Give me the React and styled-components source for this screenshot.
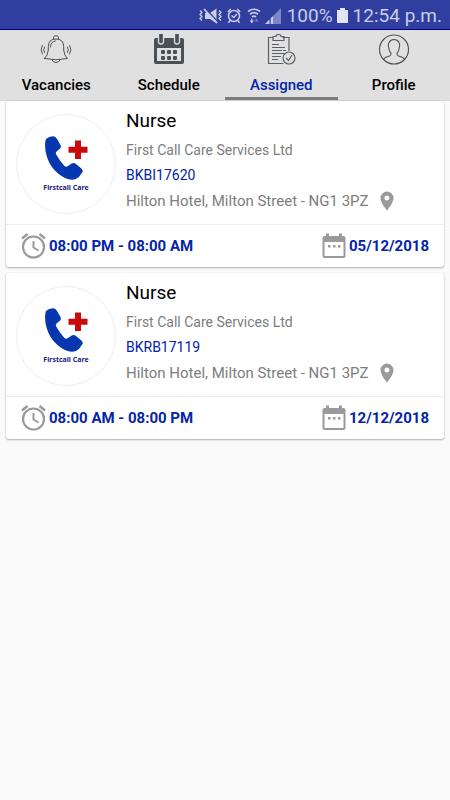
import React from 'react'
import styled, { createGlobalStyle } from 'styled-components'

const blue = '#303f9f'
const link_color = '#0424a8'
const gray = '#7d7d7d'
const icon_gray = '#9a9a9a'

const GlobalStyle = createGlobalStyle`
  * {
    box-sizing: border-box;
  }
  body {
    margin: 0;
    background: #fafafa;
    font-family: Roboto, sans-serif;
    color: #000;
  }
`

const StatusBar = styled.header`
  display: flex;
  align-items: center;
  justify-content: flex-end;
  height: 30px;
  padding: 2px 8px 0 0;
  background: ${blue};
  border-bottom: 1px solid #00008b;
  color: #c9cde8;
  font-size: 19px;
  line-height: 28px;
  svg {
    display: block;
    flex: none;
  }
`
const StatusIcons = styled.div`
  display: flex;
  align-items: center;
  gap: 4px;
  margin-right: 6px;
`
const Battery = styled.div`
  display: flex;
  align-items: center;
  gap: 4px;
  margin-right: 5px;
`

const Tabs = styled.nav`
  display: grid;
  grid-template-columns: repeat(4, 1fr);
  background: #e0e0e0;
  border-bottom: 1px solid #d6d6d6;
`
const Tab = styled.button`
  display: flex;
  flex-direction: column;
  align-items: center;
  gap: 9px;
  height: 70px;
  padding: 4px 0 0;
  border: 0;
  border-bottom: 3px solid ${props => props.$active ? '#7c7c7c' : 'transparent'};
  background: none;
  color: ${props => props.$active ? link_color : '#000'};
  font-family: inherit;
  font-size: 15px;
  font-weight: 500;
  line-height: 20px;
  cursor: pointer;
  svg {
    display: block;
  }
`

const List = styled.main`
  display: flex;
  flex-direction: column;
  gap: 6px;
  padding: 0 6px 6px;
`
const Card = styled.article`
  background: #fff;
  border-radius: 3px;
  box-shadow: 0 1px 2px rgba(0,0,0,0.3), 0 0 1px rgba(0,0,0,0.12);
`
const CardBody = styled.div`
  display: flex;
  gap: 10px;
  height: 123px;
  padding: 0 10px;
`
const Logo = styled.div`
  display: flex;
  flex: none;
  flex-direction: column;
  align-items: center;
  width: 100px;
  height: 100px;
  margin-top: 13px;
  padding-top: 21px;
  border: 1px solid #eeeeee;
  border-radius: 50%;
  color: #1a2080;
  font-family: "Noto Sans", sans-serif;
  font-size: 7px;
  font-weight: 700;
  line-height: 10px;
  svg {
    display: block;
    margin-bottom: 2px;
  }
`
const Details = styled.div`
  flex: 1;
  min-width: 0;
  padding-top: 8px;
`
const Title = styled.h2`
  margin: 0 0 7px;
  font-size: 19px;
  font-weight: 400;
  line-height: 24px;
`
const Company = styled.div`
  margin-bottom: 5px;
  color: ${gray};
  font-size: 14px;
  line-height: 20px;
`
const Reference = styled.div`
  margin-bottom: 4px;
  color: ${link_color};
  font-size: 14px;
  line-height: 20px;
`
const Address = styled.div`
  display: flex;
  align-items: center;
  gap: 12px;
  color: ${gray};
  font-size: 15px;
  line-height: 24px;
  white-space: nowrap;
`
const CardFooter = styled.div`
  display: flex;
  align-items: center;
  justify-content: space-between;
  height: 43px;
  padding: 0 15px;
  border-top: 1px solid #ececec;
`
const When = styled.div`
  display: flex;
  align-items: center;
  gap: 3px;
  color: ${link_color};
  font-size: 15px;
  font-weight: 700;
  line-height: 20px;
  svg {
    display: block;
  }
`

const MuteIcon = () => (
  <svg width="24" height="16" viewBox="0 0 24 16" fill="none" stroke="#c9cde8" strokeWidth="1.3">
    <path d="M6 5h5l6.500-4.500v15L11 11H6z" fill="#c9cde8" stroke="none" />
    <path d="M6.500 .5l12 13" stroke={blue} strokeWidth="1.400" />
    <path d="M5 1l13 14" strokeWidth="1.800" />
    <path d="M1 2.500l2 2-2 2 2 2-2 2 2 2M20 2.500l2 2-2 2 2 2-2 2 2 2" />
  </svg>
)

const StatusAlarmIcon = () => (
  <svg width="14" height="16" viewBox="0 0 14 16" fill="none" stroke="#c9cde8" strokeWidth="1.5">
    <circle cx="7" cy="8" r="5.5" />
    <path d="M.8 4l3-3M13.200 4l-3-3M3 12.500l-1.500 2.300M11 12.500l1.500 2.300M4.500 7.500l2.300 2L10 6" />
  </svg>
)

const WifiIcon = () => (
  <svg width="16" height="16" viewBox="0 0 16 16" fill="none" stroke="#c9cde8" strokeWidth="1.7">
    <path d="M3 3.500q6-4.500 12 0M5 6.200q4-3 8 0M7 8.900q2-1.700 4 0" />
    <path d="M4.800 12.500h4l-2 3zM6.200 10.500h1.200v2.500H6.200z" fill="#c9cde8" stroke="none" />
    <path d="M9.500 13.500h4l-2-3z" fill="#7781c2" stroke="none" />
  </svg>
)

const SignalIcon = () => (
  <svg width="16" height="16" viewBox="0 0 16 16">
    <path d="M16 0v16H8V8z" fill="#7c86c4" />
    <path d="M4.500 11.500V16H0zM8 8v8H5.700v-5.700z" fill="#c9cde8" />
  </svg>
)

const BatteryIcon = () => (
  <svg width="11" height="15" viewBox="0 0 11 15" fill="#e3e5f4">
    <path d="M3 0h5v2h3v13H0V2h3z" />
  </svg>
)

const BellIcon = () => (
  <svg width="32" height="32" viewBox="0 0 32 32" fill="none" stroke="#4b5054" strokeWidth="1" strokeLinecap="round">
    <path d="M13.500 5V3.500a2.500 1.800 0 0 1 5 0V5" />
    <path d="M4.500 24.500Q8 21.500 8.300 16V12.500Q8.500 5 16 5t7.700 7.500V16q.3 5.500 3.800 8.500-11.500 2.600-23 0z" strokeLinejoin="round" />
    <path d="M12 26q1 2.500 4 2.500t4-2.500M10.500 13q0-5.500 5-6" />
    <path d="M4.500 13q-1.800 2.500 0 5.500M2.300 11.500q-2.600 4.200 0 8.500M27.500 13q1.800 2.500 0 5.500M29.700 11.500q2.600 4.200 0 8.500" />
  </svg>
)

const ScheduleIcon = () => (
  <svg width="32" height="32" viewBox="0 0 32 32">
    <path d="M3 4h26q2 0 2 2v22q0 2-2 2H3q-2 0-2-2V6q0-2 2-2z" fill="#4b5054" />
    <path d="M4 14h24v13H4z" fill="#e0e0e0" />
    <rect x="5.500" y="-2" width="5" height="12" rx="2.500" fill="#4b5054" stroke="#e0e0e0" strokeWidth="1.300" />
    <rect x="21.500" y="-2" width="5" height="12" rx="2.500" fill="#4b5054" stroke="#e0e0e0" strokeWidth="1.300" />
    <g fill="#4b5054">
      <rect x="8" y="16" width="4" height="4" rx="1" />
      <rect x="14" y="16" width="4" height="4" rx="1" />
      <rect x="20" y="16" width="4" height="4" rx="1" />
      <rect x="8" y="22" width="4" height="4" rx="1" />
      <rect x="14" y="22" width="4" height="4" rx="1" />
      <rect x="20" y="22" width="4" height="4" rx="1" />
    </g>
  </svg>
)

const AssignedIcon = () => (
  <svg width="32" height="32" viewBox="0 0 32 32" fill="none" stroke="#5c6064" strokeWidth="1.200">
    <path d="M8 3.500H3.500v26h15M17.500 3.500h6.500v13.500" />
    <path d="M8 6.500v-4h3q0-2 2.500-2t2.500 2h3v4z" />
    <path d="M7 10.500h7M7 13.500h13M7 16.500h10M18 16.500h3M7 19.500h12M7 22.500h9M7 25.500h6" />
    <circle cx="24" cy="24" r="6" />
    <path d="M21 24l2.500 2.500L27 21" />
  </svg>
)

const ProfileIcon = () => (
  <svg width="32" height="32" viewBox="0 0 32 32" fill="none" stroke="#4b5054" strokeWidth="1.100">
    <circle cx="16" cy="15.500" r="14.500" />
    <path d="M5.500 25.500q.5-1.500 3-2.500l3-1q1.800-.7 1.500-3-2-2-2.200-5Q9.500 11 11 8.500 12.500 5.500 16 5.500t5 3Q22.500 11 21.200 14q-.2 3-2.200 5-.3 2.300 1.500 3l3 1q2.500 1 3 2.500" />
  </svg>
)

const PhoneLogo = () => (
  <svg width="46" height="45" viewBox="-1 0 46 45">
    <path d="M2 3Q5 0 9.500.2 12 .8 13 3l3.500 6q1.200 2.500-1 4l-3 2.500q-1.300 1.300-.3 3 4 7 8.300 11.500 1.500 1.300 3.200.3l4-2.800q2-1.300 4 .3l6 5q2 2 .3 4-2.500 4.500-6 6.200-5 2-11-1Q5 34 1.500 15 .5 6 2 3z" fill="#0637ae" />
    <path d="M31 4.500h6v6.300h6.500v6H37V23h-6v-6.200h-6.500v-6H31z" fill="#cc0808" />
  </svg>
)

const AlarmIcon = () => (
  <svg width="25" height="26" viewBox="0 0 25 26" fill="none" stroke={icon_gray} strokeWidth="2">
    <circle cx="12.500" cy="14" r="10.500" strokeWidth="2.200" />
    <path d="M1 5.500l5.500-4.500M24 5.500L18.500 1" strokeWidth="2.400" />
    <path d="M12.500 8v6.500l5 3" />
  </svg>
)

const CalendarIcon = () => (
  <svg width="24" height="26" viewBox="0 0 24 26">
    <path d="M4 .5h3V3h10V.5h3V3h1.500Q23.500 3 23.500 5v18q0 2-2 2h-19q-2 0-2-2V5q0-2 2-2H4z" fill={icon_gray} />
    <path d="M2.500 9h19v14h-19z" fill="#fff" />
    <path d="M6 12h2.500v2.500H6zM11 12h2.500v2.500H11zM16 12h2.500v2.500H16z" fill={icon_gray} />
  </svg>
)

const PinIcon = () => (
  <svg width="14" height="20" viewBox="0 0 14 20">
    <path d="M7 .5a6.500 6.500 0 0 0-6.500 6.500c0 5 6.500 12.500 6.500 12.500s6.500-7.500 6.500-12.500A6.500 6.500 0 0 0 7 .5zm0 9a2.500 2.500 0 1 1 0-5 2.500 2.500 0 0 1 0 5z" fill={icon_gray} />
  </svg>
)

const tabs = [
  { name: 'Vacancies', Icon: BellIcon },
  { name: 'Schedule', Icon: ScheduleIcon },
  { name: 'Assigned', Icon: AssignedIcon },
  { name: 'Profile', Icon: ProfileIcon },
]

const shifts = [
  { reference: 'BKBI17620', time: '08:00 PM - 08:00 AM', date: '05/12/2018' },
  { reference: 'BKRB17119', time: '08:00 AM - 08:00 PM', date: '12/12/2018' },
]

const ShiftCard = ({ shift }) => (
  <Card>
    <CardBody>
      <Logo>
        <PhoneLogo />
        Firstcall Care
      </Logo>
      <Details>
        <Title>Nurse</Title>
        <Company>First Call Care Services Ltd</Company>
        <Reference>{shift.reference}</Reference>
        <Address>
          Hilton Hotel, Milton Street - NG1 3PZ
          <PinIcon />
        </Address>
      </Details>
    </CardBody>
    <CardFooter>
      <When><AlarmIcon />{shift.time}</When>
      <When><CalendarIcon />{shift.date}</When>
    </CardFooter>
  </Card>
)

export default function App() {
  const [active, setActive] = React.useState('Assigned')
  return (
    <>
      <GlobalStyle />
      <StatusBar>
        <StatusIcons>
          <MuteIcon />
          <StatusAlarmIcon />
          <WifiIcon />
          <SignalIcon />
        </StatusIcons>
        <Battery>
          100%
          <BatteryIcon />
        </Battery>
        12:54 p.m.
      </StatusBar>
      <Tabs>
        {tabs.map(({ name, Icon }) => (
          <Tab key={name} $active={active === name} onClick={() => setActive(name)}>
            <Icon />
            {name}
          </Tab>
        ))}
      </Tabs>
      <List>
        {shifts.map(shift => <ShiftCard key={shift.reference} shift={shift} />)}
      </List>
    </>
  )
}
